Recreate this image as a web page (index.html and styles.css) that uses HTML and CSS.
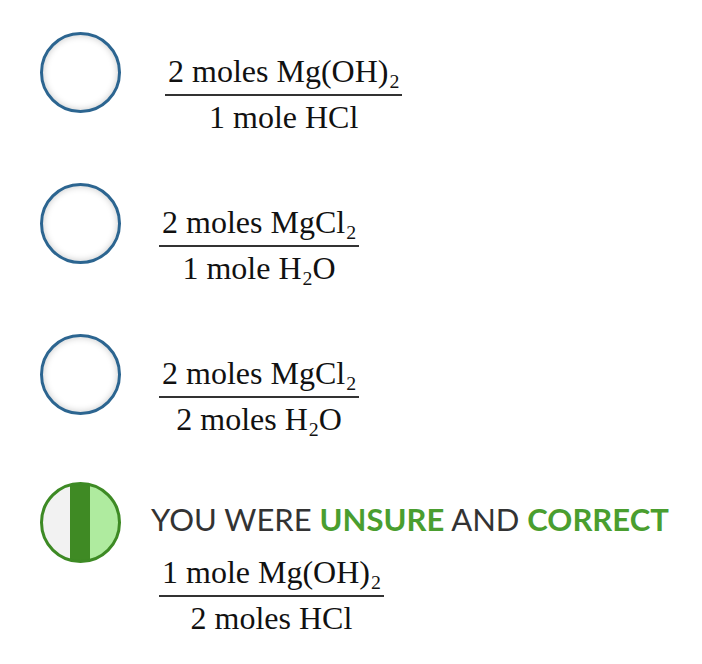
FILE: index.html
```html
<!DOCTYPE html>
<html lang="en">
<head>
<meta charset="utf-8">
<title>Question options</title>
<link rel="stylesheet" href="styles.css">
</head>
<body>
<ul class="options">
  <li class="option">
    <span class="radio"></span>
    <div class="content">
      <div class="frac frac--shift">
        <span class="num">2 moles Mg(OH)<sub>2</sub></span>
        <span class="den">1 mole HCl</span>
      </div>
    </div>
  </li>
  <li class="option">
    <span class="radio"></span>
    <div class="content">
      <div class="frac">
        <span class="num">2 moles MgCl<sub>2</sub></span>
        <span class="den">1 mole H<sub>2</sub>O</span>
      </div>
    </div>
  </li>
  <li class="option">
    <span class="radio"></span>
    <div class="content">
      <div class="frac">
        <span class="num">2 moles MgCl<sub>2</sub></span>
        <span class="den">2 moles H<sub>2</sub>O</span>
      </div>
    </div>
  </li>
  <li class="option option--answered">
    <span class="radio radio--unsure"></span>
    <div class="content">
      <p class="feedback">YOU WERE <strong>UNSURE</strong> AND <strong>CORRECT</strong></p>
      <div class="frac frac--after">
        <span class="num">1 mole Mg(OH)<sub>2</sub></span>
        <span class="den">2 moles HCl</span>
      </div>
    </div>
  </li>
</ul>
</body>
</html>
```

FILE: styles.css
```css
html, body {
  margin: 0;
  padding: 0;
  background: #ffffff;
}

.options {
  list-style: none;
  margin: 0;
  padding: 32px 0 0 40px;
  display: flex;
  flex-direction: column;
  gap: 48px;
}

.option {
  display: flex;
  align-items: flex-start;
}

.option--answered {
  margin-top: -3px;
}

.radio {
  flex: none;
  width: 81px;
  height: 81px;
  box-sizing: border-box;
  border: 3px solid #2c6590;
  border-radius: 50%;
  background: #ffffff;
  box-shadow: inset 0 0 7px rgba(0, 0, 0, 0.22);
}

.radio--unsure {
  border-color: #3d8a24;
  box-shadow: none;
  background: linear-gradient(to right,
    #f2f2f2 0, #f2f2f2 calc(50% - 10px),
    #3f8a24 calc(50% - 10px), #3f8a24 calc(50% + 10px),
    #afeb9f calc(50% + 10px), #afeb9f 100%);
}

.content {
  margin-left: 30px;
  display: flex;
  flex-direction: column;
  align-items: flex-start;
}

.frac {
  margin: 21px 0 0 8px;
  display: inline-flex;
  flex-direction: column;
  align-items: center;
  font-family: "Liberation Serif", "Times New Roman", serif;
  font-size: 32px;
  line-height: 36px;
  color: #111111;
  white-space: nowrap;
}

.frac--shift {
  margin-left: 14px;
}

.frac--after {
  margin-top: 17px;
}

.num {
  align-self: stretch;
  text-align: center;
  padding: 0 3px 5px;
  border-bottom: 2px solid #333333;
}

.den {
  padding: 3px 3px 0;
}

.frac sub {
  font-size: 0.62em;
  line-height: 0;
  margin-left: 1px;
  vertical-align: -0.3em;
}

.feedback {
  margin: 19px 0 0 0;
  font-family: Lato, "Liberation Sans", sans-serif;
  font-size: 31px;
  line-height: 36px;
  color: #333333;
  white-space: nowrap;
}

.feedback strong {
  font-weight: 700;
  color: #4a9e2f;
}
```
